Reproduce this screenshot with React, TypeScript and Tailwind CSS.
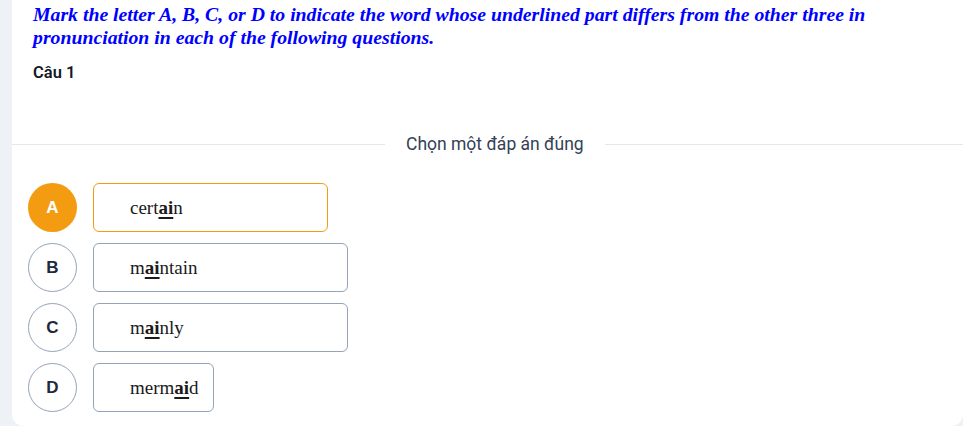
import React from "react";

const options = [
  { letter: "A", pre: "cert", u: "ai", post: "n", w: "w-[235px]", selected: true },
  { letter: "B", pre: "m", u: "ai", post: "ntain", w: "w-[255px]", selected: false },
  { letter: "C", pre: "m", u: "ai", post: "nly", w: "w-[255px]", selected: false },
  { letter: "D", pre: "merm", u: "ai", post: "d", w: "w-[121px]", selected: false },
];

export default function App() {
  return (
    <div className="w-[963px] h-[426px] bg-[#eef2f6] flex overflow-hidden">
      <div className="ml-[12px] flex-1 bg-white rounded-b-[12px] h-[426px] flex flex-col">
        <div
          className="pl-[21px] pt-[3px] text-[19.75px] leading-[23px] italic font-bold text-[#0000ff]"
          style={{ fontFamily: '"Liberation Serif", serif' }}
        >
          Mark the letter A, B, C, or D to indicate the word whose underlined part differs from the other three in
          <br />
          pronunciation in each of the following questions.
        </div>
        <div
          className="pl-[21px] mt-[14px] text-[16.5px] leading-[20px] font-semibold text-[#111827]"
          style={{ fontFamily: "Roboto, sans-serif" }}
        >
          Câu 1
        </div>
        <div className="flex items-center mt-[50px]">
          <div className="w-[373px] h-px bg-[#e5e7eb]" />
          <div
            className="px-[21px] text-[17.5px] leading-[22px] text-[#334155]"
            style={{ fontFamily: "Roboto, sans-serif" }}
          >
            Chọn một đáp án đúng
          </div>
          <div className="flex-1 h-px bg-[#e5e7eb]" />
        </div>
        <div className="flex flex-col gap-[11px] mt-[28px] pl-[16px]">
          {options.map((o) => (
            <div key={o.letter} className="flex items-center gap-[16px]">
              <div
                className={
                  o.selected
                    ? "w-[49px] h-[49px] rounded-full bg-[#f39c12] flex items-center justify-center text-white font-bold text-[17px]"
                    : "w-[49px] h-[49px] rounded-full border border-[#94a3b8] bg-white flex items-center justify-center text-[#1e293b] font-bold text-[17px]"
                }
                style={{ fontFamily: '"Liberation Sans", Arial, sans-serif' }}
              >
                {o.letter}
              </div>
              <div
                className={
                  (o.selected ? "border-[#f39c12] " : "border-[#94a3b8] ") +
                  o.w +
                  " h-[49px] rounded-[6px] border flex items-center pl-[36px] pt-[2px] text-[19px] text-[#1a1a1a]"
                }
                style={{ fontFamily: '"Liberation Serif", serif' }}
              >
                <span>
                  {o.pre}
                  <span className="font-bold underline underline-offset-[3px] decoration-[2px]">{o.u}</span>
                  {o.post}
                </span>
              </div>
            </div>
          ))}
        </div>
      </div>
    </div>
  );
}
